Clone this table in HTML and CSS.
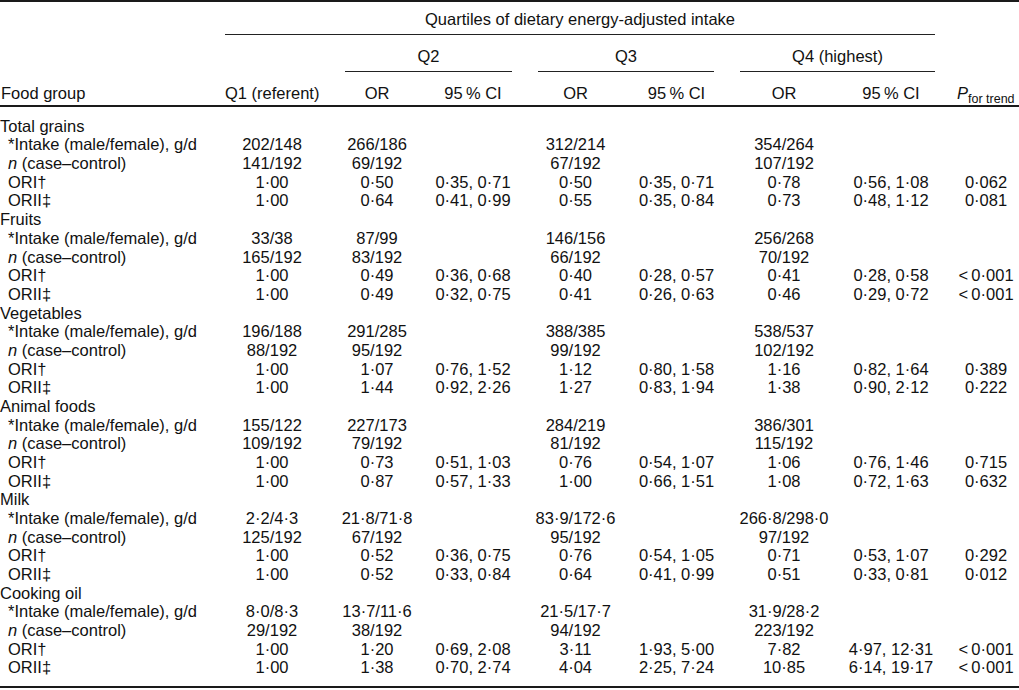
FILE: index.html
```html
<!DOCTYPE html>
<html>
<head>
<meta charset="utf-8">
<link rel="stylesheet" href="styles.css">
</head>
<body>
<div class="tbl">
  <div class="head">
    <div class="grid hr1">
      <div class="span-q">Quartiles of dietary energy-adjusted intake</div>
    </div>
    <div class="grid hr2">
      <div class="sp sp2">Q2</div>
      <div class="sp sp3">Q3</div>
      <div class="sp sp4">Q4 (highest)</div>
    </div>
    <div class="grid hr3">
      <div class="lab">Food group</div>
      <div class="c1 h-q1">Q1 (referent)</div>
      <div class="c2">OR</div>
      <div class="c3">95&#8201;% CI</div>
      <div class="c4">OR</div>
      <div class="c5">95&#8201;% CI</div>
      <div class="c6">OR</div>
      <div class="c7">95&#8201;% CI</div>
      <div class="c8 h-p"><i>P</i><sub>for trend</sub></div>
    </div>
  </div>
  <div class="body">
    <div class="grid row"><div class="grp">Total grains</div></div>
    <div class="grid row"><div class="sub">*Intake (male/female), g/d</div><div class="c1">202/148</div><div class="c2">266/186</div><div class="c3"></div><div class="c4">312/214</div><div class="c5"></div><div class="c6">354/264</div><div class="c7"></div><div class="c8"></div></div>
    <div class="grid row"><div class="sub"><i>n</i> (case–control)</div><div class="c1">141/192</div><div class="c2">69/192</div><div class="c3"></div><div class="c4">67/192</div><div class="c5"></div><div class="c6">107/192</div><div class="c7"></div><div class="c8"></div></div>
    <div class="grid row"><div class="sub">ORI†</div><div class="c1">1·00</div><div class="c2">0·50</div><div class="c3">0·35, 0·71</div><div class="c4">0·50</div><div class="c5">0·35, 0·71</div><div class="c6">0·78</div><div class="c7">0·56, 1·08</div><div class="c8">0·062</div></div>
    <div class="grid row"><div class="sub">ORII‡</div><div class="c1">1·00</div><div class="c2">0·64</div><div class="c3">0·41, 0·99</div><div class="c4">0·55</div><div class="c5">0·35, 0·84</div><div class="c6">0·73</div><div class="c7">0·48, 1·12</div><div class="c8">0·081</div></div>

    <div class="grid row"><div class="grp">Fruits</div></div>
    <div class="grid row"><div class="sub">*Intake (male/female), g/d</div><div class="c1">33/38</div><div class="c2">87/99</div><div class="c3"></div><div class="c4">146/156</div><div class="c5"></div><div class="c6">256/268</div><div class="c7"></div><div class="c8"></div></div>
    <div class="grid row"><div class="sub"><i>n</i> (case–control)</div><div class="c1">165/192</div><div class="c2">83/192</div><div class="c3"></div><div class="c4">66/192</div><div class="c5"></div><div class="c6">70/192</div><div class="c7"></div><div class="c8"></div></div>
    <div class="grid row"><div class="sub">ORI†</div><div class="c1">1·00</div><div class="c2">0·49</div><div class="c3">0·36, 0·68</div><div class="c4">0·40</div><div class="c5">0·28, 0·57</div><div class="c6">0·41</div><div class="c7">0·28, 0·58</div><div class="c8">&lt;&#8201;0·001</div></div>
    <div class="grid row"><div class="sub">ORII‡</div><div class="c1">1·00</div><div class="c2">0·49</div><div class="c3">0·32, 0·75</div><div class="c4">0·41</div><div class="c5">0·26, 0·63</div><div class="c6">0·46</div><div class="c7">0·29, 0·72</div><div class="c8">&lt;&#8201;0·001</div></div>

    <div class="grid row"><div class="grp">Vegetables</div></div>
    <div class="grid row"><div class="sub">*Intake (male/female), g/d</div><div class="c1">196/188</div><div class="c2">291/285</div><div class="c3"></div><div class="c4">388/385</div><div class="c5"></div><div class="c6">538/537</div><div class="c7"></div><div class="c8"></div></div>
    <div class="grid row"><div class="sub"><i>n</i> (case–control)</div><div class="c1">88/192</div><div class="c2">95/192</div><div class="c3"></div><div class="c4">99/192</div><div class="c5"></div><div class="c6">102/192</div><div class="c7"></div><div class="c8"></div></div>
    <div class="grid row"><div class="sub">ORI†</div><div class="c1">1·00</div><div class="c2">1·07</div><div class="c3">0·76, 1·52</div><div class="c4">1·12</div><div class="c5">0·80, 1·58</div><div class="c6">1·16</div><div class="c7">0·82, 1·64</div><div class="c8">0·389</div></div>
    <div class="grid row"><div class="sub">ORII‡</div><div class="c1">1·00</div><div class="c2">1·44</div><div class="c3">0·92, 2·26</div><div class="c4">1·27</div><div class="c5">0·83, 1·94</div><div class="c6">1·38</div><div class="c7">0·90, 2·12</div><div class="c8">0·222</div></div>

    <div class="grid row"><div class="grp">Animal foods</div></div>
    <div class="grid row"><div class="sub">*Intake (male/female), g/d</div><div class="c1">155/122</div><div class="c2">227/173</div><div class="c3"></div><div class="c4">284/219</div><div class="c5"></div><div class="c6">386/301</div><div class="c7"></div><div class="c8"></div></div>
    <div class="grid row"><div class="sub"><i>n</i> (case–control)</div><div class="c1">109/192</div><div class="c2">79/192</div><div class="c3"></div><div class="c4">81/192</div><div class="c5"></div><div class="c6">115/192</div><div class="c7"></div><div class="c8"></div></div>
    <div class="grid row"><div class="sub">ORI†</div><div class="c1">1·00</div><div class="c2">0·73</div><div class="c3">0·51, 1·03</div><div class="c4">0·76</div><div class="c5">0·54, 1·07</div><div class="c6">1·06</div><div class="c7">0·76, 1·46</div><div class="c8">0·715</div></div>
    <div class="grid row"><div class="sub">ORII‡</div><div class="c1">1·00</div><div class="c2">0·87</div><div class="c3">0·57, 1·33</div><div class="c4">1·00</div><div class="c5">0·66, 1·51</div><div class="c6">1·08</div><div class="c7">0·72, 1·63</div><div class="c8">0·632</div></div>

    <div class="grid row"><div class="grp">Milk</div></div>
    <div class="grid row"><div class="sub">*Intake (male/female), g/d</div><div class="c1">2·2/4·3</div><div class="c2">21·8/71·8</div><div class="c3"></div><div class="c4">83·9/172·6</div><div class="c5"></div><div class="c6">266·8/298·0</div><div class="c7"></div><div class="c8"></div></div>
    <div class="grid row"><div class="sub"><i>n</i> (case–control)</div><div class="c1">125/192</div><div class="c2">67/192</div><div class="c3"></div><div class="c4">95/192</div><div class="c5"></div><div class="c6">97/192</div><div class="c7"></div><div class="c8"></div></div>
    <div class="grid row"><div class="sub">ORI†</div><div class="c1">1·00</div><div class="c2">0·52</div><div class="c3">0·36, 0·75</div><div class="c4">0·76</div><div class="c5">0·54, 1·05</div><div class="c6">0·71</div><div class="c7">0·53, 1·07</div><div class="c8">0·292</div></div>
    <div class="grid row"><div class="sub">ORII‡</div><div class="c1">1·00</div><div class="c2">0·52</div><div class="c3">0·33, 0·84</div><div class="c4">0·64</div><div class="c5">0·41, 0·99</div><div class="c6">0·51</div><div class="c7">0·33, 0·81</div><div class="c8">0·012</div></div>

    <div class="grid row"><div class="grp">Cooking oil</div></div>
    <div class="grid row"><div class="sub">*Intake (male/female), g/d</div><div class="c1">8·0/8·3</div><div class="c2">13·7/11·6</div><div class="c3"></div><div class="c4">21·5/17·7</div><div class="c5"></div><div class="c6">31·9/28·2</div><div class="c7"></div><div class="c8"></div></div>
    <div class="grid row"><div class="sub"><i>n</i> (case–control)</div><div class="c1">29/192</div><div class="c2">38/192</div><div class="c3"></div><div class="c4">94/192</div><div class="c5"></div><div class="c6">223/192</div><div class="c7"></div><div class="c8"></div></div>
    <div class="grid row"><div class="sub">ORI†</div><div class="c1">1·00</div><div class="c2">1·20</div><div class="c3">0·69, 2·08</div><div class="c4">3·11</div><div class="c5">1·93, 5·00</div><div class="c6">7·82</div><div class="c7">4·97, 12·31</div><div class="c8">&lt;&#8201;0·001</div></div>
    <div class="grid row"><div class="sub">ORII‡</div><div class="c1">1·00</div><div class="c2">1·38</div><div class="c3">0·70, 2·74</div><div class="c4">4·04</div><div class="c5">2·25, 7·24</div><div class="c6">10·85</div><div class="c7">6·14, 19·17</div><div class="c8">&lt;&#8201;0·001</div></div>
  </div>
</div>
</body>
</html>
```

FILE: styles.css
```css
html, body {
  margin: 0;
  padding: 0;
  background: #ffffff;
}

body {
  font-family: "Liberation Sans", Arial, sans-serif;
  font-size: 16.5px;
  color: #111111;
}

.tbl {
  width: 1019px;
  border-top: 2px solid #1a1a1a;
  border-bottom: 2px solid #1a1a1a;
}

.grid {
  display: grid;
  grid-template-columns: 225px 99px 101px 100px 101px 104px 108px 100px 81px;
  line-height: 18.67px;
  white-space: nowrap;
}

.grid > div {
  text-align: center;
}

/* header */
.hr1 {
  padding-top: 8.3px;
}

.span-q {
  grid-column: 2 / 9;
  margin-right: 3px;
  padding-bottom: 4.8px;
  border-bottom: 1px solid #222;
}

.hr2 {
  margin-top: 11.8px;
}

.sp {
  padding-bottom: 5.3px;
  border-bottom: 1px solid #222;
}

.sp2 {
  grid-column: 3 / 5;
  margin-left: 21px;
  margin-right: 13px;
}

.sp3 {
  grid-column: 5 / 7;
  margin-left: 13px;
  margin-right: 16px;
}

.sp4 {
  grid-column: 7 / 9;
  margin-left: 10px;
  margin-right: 3px;
}

.hr3 {
  margin-top: 12.8px;
  padding-bottom: 2.3px;
  border-bottom: 2px solid #1a1a1a;
}

.grid > .lab {
  text-align: left;
  padding-left: 1px;
}

.grid > .h-q1 {
  text-align: left;
}

.grid > .h-p {
  text-align: left;
  padding-left: 19px;
}

.h-p sub {
  font-size: 12.5px;
  vertical-align: -4px;
  line-height: 0;
}

/* body */
.body {
  padding-top: 9.5px;
  padding-bottom: 8.8px;
}

.grid > .grp {
  grid-column: 1 / 10;
  text-align: left;
}

.grid > .sub {
  text-align: left;
  padding-left: 8px;
}

.c1 { padding-right: 5px; }
.c2 { padding-left: 5px; }
.c3 { padding-right: 4px; }
.c5 { padding-right: 3px; }
.c7 { padding-left: 6px; }
.c8 { padding-left: 15px; }
```
